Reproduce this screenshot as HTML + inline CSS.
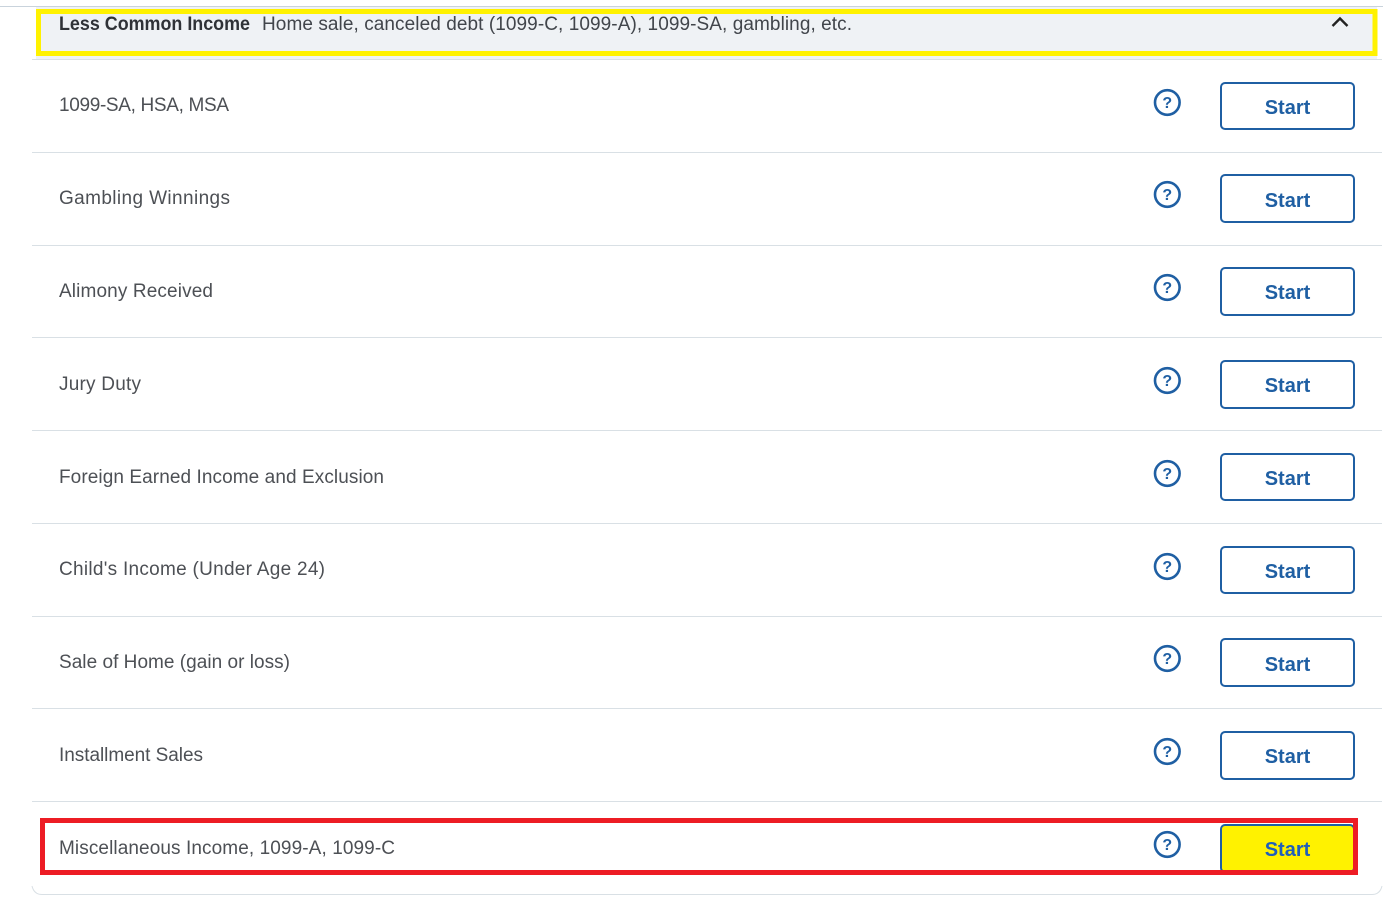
<!DOCTYPE html>
<html lang="en">
<head>
<meta charset="utf-8">
<title>Less Common Income</title>
<style>
html,body{margin:0;padding:0;background:#fff;width:1383px;height:898px;overflow:hidden}
svg{display:block}
text{font-family:"Liberation Sans",sans-serif}
.l{font-size:19px;fill:#4d5055}
.s{font-size:20px;font-weight:700;fill:#1f5fa3;text-anchor:middle}
.b{fill:#fff;stroke:#1f5fa3;stroke-width:2}
.i circle{fill:none;stroke:#1f5fa3;stroke-width:2.6}
.i text{font-size:16px;font-weight:700;fill:#1f5fa3;text-anchor:middle}
.r{stroke:#d9e0e5;stroke-width:1;fill:none}
</style>
</head>
<body>
<svg width="1383" height="898" viewBox="0 0 1383 898" xmlns="http://www.w3.org/2000/svg">
<defs>
<g id="q" class="i"><circle cx="0" cy="0" r="12.3"/><text x="0" y="5.6">?</text></g>
</defs>

<line x1="0" y1="6.5" x2="1383" y2="6.5" stroke="#c9d3dc"/>
<rect x="36" y="7" width="1341" height="52" fill="#eff2f5"/>
<rect x="38.5" y="11.5" width="1336.5" height="42" fill="none" stroke="#fff200" stroke-width="5"/>
<text x="59" y="30" font-size="19" font-weight="700" fill="#2f3237" textLength="191" lengthAdjust="spacingAndGlyphs">Less Common Income</text>
<text x="262" y="30" font-size="19" fill="#41454b" textLength="590" lengthAdjust="spacing">Home sale, canceled debt (1099-C, 1099-A), 1099-SA, gambling, etc.</text>
<path d="M1332.5 26L1340 18.5L1347.5 26" fill="none" stroke="#222" stroke-width="2.4"/>

<line class="r" x1="32" y1="59.5" x2="1382" y2="59.5"/>
<line class="r" x1="32" y1="152.5" x2="1382" y2="152.5"/>
<line class="r" x1="32" y1="245.5" x2="1382" y2="245.5"/>
<line class="r" x1="32" y1="337.5" x2="1382" y2="337.5"/>
<line class="r" x1="32" y1="430.5" x2="1382" y2="430.5"/>
<line class="r" x1="32" y1="523.5" x2="1382" y2="523.5"/>
<line class="r" x1="32" y1="616.5" x2="1382" y2="616.5"/>
<line class="r" x1="32" y1="708.5" x2="1382" y2="708.5"/>
<line class="r" x1="32" y1="801.5" x2="1382" y2="801.5"/>
<path class="r" d="M32 886Q34 894.5 42 894.5H1372Q1380 894.5 1382 886"/>

<text class="l" x="59" y="111" textLength="170" lengthAdjust="spacing">1099-SA, HSA, MSA</text>
<text class="l" x="59" y="204" textLength="171" lengthAdjust="spacing">Gambling Winnings</text>
<text class="l" x="59" y="297" textLength="154" lengthAdjust="spacing">Alimony Received</text>
<text class="l" x="59" y="390" textLength="82" lengthAdjust="spacing">Jury Duty</text>
<text class="l" x="59" y="483" textLength="325" lengthAdjust="spacing">Foreign Earned Income and Exclusion</text>
<text class="l" x="59" y="575" textLength="266" lengthAdjust="spacing">Child's Income (Under Age 24)</text>
<text class="l" x="59" y="668" textLength="231" lengthAdjust="spacing">Sale of Home (gain or loss)</text>
<text class="l" x="59" y="761" textLength="144" lengthAdjust="spacing">Installment Sales</text>
<text class="l" x="59" y="854" textLength="336" lengthAdjust="spacing">Miscellaneous Income, 1099-A, 1099-C</text>

<use href="#q" x="1167.3" y="102.5"/>
<use href="#q" x="1167.3" y="194.5"/>
<use href="#q" x="1167.3" y="287.5"/>
<use href="#q" x="1167.3" y="380.5"/>
<use href="#q" x="1167.3" y="473.5"/>
<use href="#q" x="1167.3" y="566.5"/>
<use href="#q" x="1167.3" y="658.5"/>
<use href="#q" x="1167.3" y="751.5"/>
<use href="#q" x="1167.3" y="844.5"/>

<rect class="b" x="1221" y="83" width="133" height="46" rx="4"/><text class="s" x="1287.5" y="114">Start</text>
<rect class="b" x="1221" y="175" width="133" height="47" rx="4"/><text class="s" x="1287.5" y="207">Start</text>
<rect class="b" x="1221" y="268" width="133" height="47" rx="4"/><text class="s" x="1287.5" y="299">Start</text>
<rect class="b" x="1221" y="361" width="133" height="47" rx="4"/><text class="s" x="1287.5" y="392">Start</text>
<rect class="b" x="1221" y="454" width="133" height="46" rx="4"/><text class="s" x="1287.5" y="485">Start</text>
<rect class="b" x="1221" y="547" width="133" height="46" rx="4"/><text class="s" x="1287.5" y="578">Start</text>
<rect class="b" x="1221" y="639" width="133" height="47" rx="4"/><text class="s" x="1287.5" y="671">Start</text>
<rect class="b" x="1221" y="732" width="133" height="47" rx="4"/><text class="s" x="1287.5" y="763">Start</text>

<rect x="1221" y="825" width="133" height="47" rx="4" fill="#fff200" stroke="#1f5fa3" stroke-width="2"/>
<text class="s" x="1287.5" y="856" style="fill:#1f5fbb">Start</text>
<rect x="42.5" y="820.5" width="1313" height="52" fill="none" stroke="#ed1c24" stroke-width="5"/>
</svg>
</body>
</html>
